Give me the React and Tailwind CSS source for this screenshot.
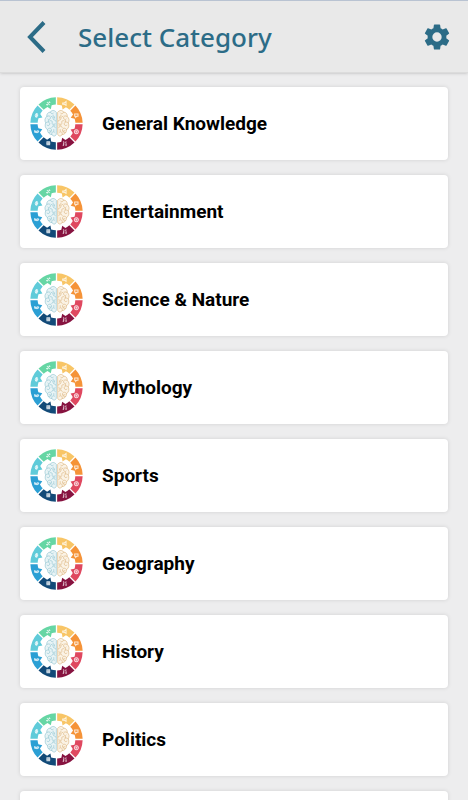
const categories = [
  "General Knowledge",
  "Entertainment",
  "Science & Nature",
  "Mythology",
  "Sports",
  "Geography",
  "History",
  "Politics",
  "",
];

// clockwise from the top, 45 degrees each
const segments = [
  { color: "#f8c566", icon: "M-6 -2h5l5 -4v11l-5 -3h-5z" },
  { color: "#f59338", icon: "M-5 -4h10v7h-4l-3 3v-3h-3z" },
  { color: "#df4860", icon: "M0 -6a6 6 0 1 0 .1 0zM-3 0h6M0 -3v6" },
  { color: "#871340", icon: "M-5 -5l4 2M5 -5l-3 3M-3 -2v7M4 0v6M-6 6h4M2 6h4" },
  { color: "#124a78", icon: "M-4 -5h8v9h-8zM-6 0h12M0 -5v9" },
  { color: "#2b9fd4", icon: "M-6 -3l5 2l5 -2l2 3l-5 3l-7 -2z" },
  { color: "#5fcbd9", icon: "M4 -4h-6l-2 4h7l-2 4h-6M0 -7v14" },
  { color: "#66d6a4", icon: "M-4 -5l8 9M4 -5l-8 9M-6 2l4 3M2 -6l4 3" },
];

// ring slice with a small pointer in the middle of its inner edge
const SEGMENT =
  "M2 -77.9A78 78 0 0 1 53.7 -56.5L38.4 -41.2A56 56 0 0 0 28 -48.5L18 -42L16 -53.7A56 56 0 0 0 2 -56Z";

function BrainWheel() {
  return (
    <svg viewBox="-79 -79 158 158" className="size-[53px] shrink-0" aria-hidden="true">
      {segments.map((s, i) => {
        const a = ((i * 45 + 22.5) * Math.PI) / 180;
        return (
          <g key={s.color}>
            <path d={SEGMENT} fill={s.color} transform={`rotate(${i * 45})`} />
            <path
              d={s.icon}
              fill="none"
              stroke="#fff"
              strokeOpacity="0.8"
              strokeWidth="3"
              transform={`translate(${Math.sin(a) * 64} ${-Math.cos(a) * 64})`}
            />
          </g>
        );
      })}
      <g fill="none" strokeLinecap="round" strokeLinejoin="round" strokeWidth="2">
        <g stroke="#94c6d2">
          <path d="M-1 -34c-5 -7 -14 -6 -17 0c-8 0 -12 7 -11 13c-6 5 -7 13 -3 19c-4 8 -1 17 5 20c0 10 7 15 13 15c4 6 11 6 13 0z" fill="#e9f4f6" />
          <path d="M-18 -34c1 6 7 6 9 3M-29 -21c6 -4 11 -1 11 4s-6 7 -8 4M-10 -25v11c0 5 8 2 8 7M-32 -2c6 -5 12 -2 12 3s-5 7 -8 4M-20 -8c5 -3 9 2 7 6s4 6 9 3M-27 18c4 -6 12 -5 12 1s-6 6 -7 2M-14 12c0 -6 10 -5 10 0M-14 33c-2 -7 4 -11 8 -7M-23 27c5 1 7 -2 7 -5M-8 18v5M-16 -22l3 3M-24 -9v4M-6 -20v4M-10 5h5" />
        </g>
        <g stroke="#deb984">
          <path d="M4 -34c5 -7 14 -6 17 0c8 0 12 7 11 13c6 5 7 13 3 19c4 8 1 17 -5 20c0 10 -7 15 -13 15c-4 6 -11 6 -13 0z" fill="#fbf3e6" />
          <path d="M21 -34c-1 6 -7 6 -9 3M32 -21c-6 -4 -11 -1 -11 4s6 7 8 4M13 -25v11c0 5 -8 2 -8 7M35 -2c-6 -5 -12 -2 -12 3s5 7 8 4M23 -8c-5 -3 -9 2 -7 6s-4 6 -9 3M30 18c-4 -6 -12 -5 -12 1s6 6 7 2M17 12c0 -6 -10 -5 -10 0M17 33c2 -7 -4 -11 -8 -7M26 27c-5 1 -7 -2 -7 -5M11 18v5M19 -22l-3 3M27 -9v4M9 -20v4M13 5h-5" />
        </g>
      </g>
    </svg>
  );
}

function Header() {
  return (
    <header className="z-10 flex h-[73px] shrink-0 items-center border-t border-b border-t-[#b9c3d2] border-b-[#dcdcdc] bg-[#e9e9e9] pr-[18px] pl-6 text-[#2c6c87] shadow-sm">
      <button type="button" aria-label="Back" className="flex size-6 items-center justify-center">
        <svg viewBox="0 0 20 32" className="h-8 w-5 shrink-0" fill="none" stroke="currentColor" strokeWidth="4">
          <path d="M18 1.5L4 16l14 14.5" />
        </svg>
      </button>
      <h1 className="ml-[30px] flex-1 font-['Noto_Sans',sans-serif] text-[26px] leading-8 font-medium">
        Select Category
      </h1>
      <button type="button" aria-label="Settings" className="flex size-[26px] items-center justify-center">
        <svg viewBox="2 2 20 20" className="size-[26px]" fill="currentColor">
          <path d="M19.14 12.94c.04-.3.06-.61.06-.94 0-.32-.02-.64-.07-.94l2.03-1.58a.49.49 0 0 0 .12-.61l-1.92-3.32a.488.488 0 0 0-.59-.22l-2.39.96c-.5-.38-1.03-.7-1.62-.94l-.36-2.54a.484.484 0 0 0-.48-.41h-3.84c-.24 0-.43.17-.47.41l-.36 2.54c-.59.24-1.13.57-1.62.94l-2.39-.96c-.22-.08-.47 0-.59.22L2.74 8.87c-.12.21-.08.47.12.61l2.03 1.58c-.05.3-.09.63-.09.94s.02.64.07.94l-2.03 1.58a.49.49 0 0 0-.12.61l1.92 3.32c.12.22.37.29.59.22l2.39-.96c.5.38 1.03.7 1.62.94l.36 2.54c.05.24.24.41.48.41h3.84c.24 0 .44-.17.47-.41l.36-2.54c.59-.24 1.13-.56 1.62-.94l2.39.96c.22.08.47 0 .59-.22l1.92-3.32c.12-.22.07-.47-.12-.61l-2.01-1.58zM12 15.6A3.6 3.6 0 1 1 12 8.4a3.6 3.6 0 0 1 0 7.2z" />
        </svg>
      </button>
    </header>
  );
}

export default function App() {
  return (
    <div className="flex h-screen flex-col bg-[#ededee]">
      <Header />
      <main className="min-h-0 flex-1 overflow-y-auto px-5 pt-[14px] pb-4 [scrollbar-width:none]">
        <ul className="flex flex-col gap-[15px]">
          {categories.map((name) => (
            <li key={name}>
              <button
                type="button"
                className="flex h-[73px] w-full items-center gap-[19px] rounded bg-white pl-[10px] text-left font-[Roboto,sans-serif] text-[19px] leading-[27px] font-bold text-black shadow-[0_0_4px_rgba(0,0,0,0.12)]"
              >
                <BrainWheel />
                {name}
              </button>
            </li>
          ))}
        </ul>
      </main>
    </div>
  );
}
